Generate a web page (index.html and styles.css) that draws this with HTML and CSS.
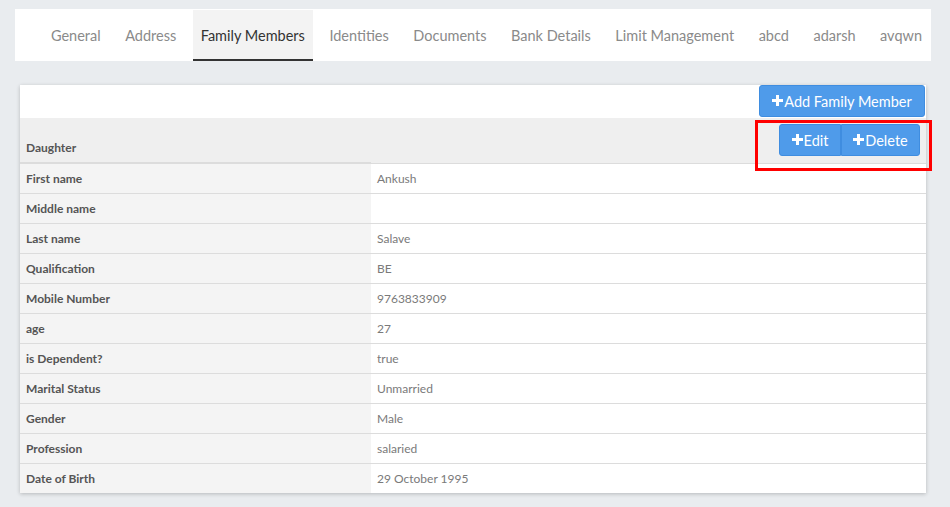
FILE: index.html
```html
<!DOCTYPE html>
<html>
<head>
<meta charset="utf-8">
<link rel="stylesheet" href="styles.css">
</head>
<body>
<div class="page">
  <nav class="tabs">
    <a class="tab">General</a>
    <a class="tab">Address</a>
    <a class="tab active">Family Members</a>
    <a class="tab">Identities</a>
    <a class="tab">Documents</a>
    <a class="tab">Bank Details</a>
    <a class="tab">Limit Management</a>
    <a class="tab">abcd</a>
    <a class="tab">adarsh</a>
    <a class="tab">avqwn</a>
  </nav>

  <section class="card">
    <div class="card-top">
      <button class="btn btn-add"><svg class="plus" viewBox="0 0 11 11"><path d="M4 0h3v4h4v3H7v4H4V7H0V4h4z" fill="#fff"/></svg>Add Family Member</button>
    </div>
    <div class="table">
      <div class="th th-label">Daughter</div>
      <div class="th th-actions">
        <div class="btn-group">
          <button class="btn"><svg class="plus" viewBox="0 0 11 11"><path d="M4 0h3v4h4v3H7v4H4V7H0V4h4z" fill="#fff"/></svg>Edit</button>
          <button class="btn"><svg class="plus" viewBox="0 0 11 11"><path d="M4 0h3v4h4v3H7v4H4V7H0V4h4z" fill="#fff"/></svg>Delete</button>
        </div>
      </div>

      <div class="lbl">First name</div><div class="val">Ankush</div>
      <div class="lbl">Middle name</div><div class="val"></div>
      <div class="lbl">Last name</div><div class="val">Salave</div>
      <div class="lbl">Qualification</div><div class="val">BE</div>
      <div class="lbl">Mobile Number</div><div class="val">9763833909</div>
      <div class="lbl">age</div><div class="val">27</div>
      <div class="lbl">is Dependent?</div><div class="val">true</div>
      <div class="lbl">Marital Status</div><div class="val">Unmarried</div>
      <div class="lbl">Gender</div><div class="val">Male</div>
      <div class="lbl">Profession</div><div class="val">salaried</div>
      <div class="lbl">Date of Birth</div><div class="val">29 October 1995</div>
    </div>
    <div class="highlight"></div>
  </section>
</div>
</body>
</html>
```

FILE: styles.css
```css
* { box-sizing: border-box; }
html, body { margin: 0; padding: 0; }
body {
  background: #e9ecef;
  font-family: Lato, "Noto Sans", sans-serif;
  width: 950px;
  height: 507px;
  overflow: hidden;
}
.page {
  padding: 9px 19px 0 15px;
}
.tabs {
  background: #fff;
  height: 52px;
  display: flex;
  justify-content: flex-end;
  gap: 8.5px;
  padding: 1px 1px 0 0;
}
.tab {
  display: flex;
  align-items: center;
  padding: 0 8px;
  font-size: 14.5px;
  color: #8a8a8a;
  border-bottom: 2px solid transparent;
  height: 51px;
  padding-top: 1px;
}
.tab.active {
  background: #f3f3f3;
  color: #333;
  border-bottom-color: #333;
}
.card {
  position: relative;
  margin: 24px 0 0 5px;
  width: 906px;
  background: #fff;
  box-shadow: 0 1px 4px rgba(0,0,0,0.22);
}
.card-top {
  height: 33px;
  display: flex;
  justify-content: flex-end;
  padding-right: 1px;
}
.btn {
  font-family: inherit;
  background: #4f9bea;
  color: #fff;
  border: 1px solid #3f8de0;
  border-radius: 3px;
  height: 32px;
  font-size: 14.5px;
  padding: 0 12px;
  display: inline-flex;
  align-items: center;
  cursor: pointer;
}
.btn-add { width: 166px; justify-content: center; padding: 0; }
.plus {
  width: 11px;
  height: 11px;
  margin-right: 1px;
  margin-top: -1px;
  flex: none;
}
.btn-group { display: flex; }
.btn-group .btn { border-radius: 0; }
.btn-group .btn:first-child { border-radius: 3px 0 0 3px; width: 62px; justify-content: center; padding: 0; }
.btn-group .btn:last-child { border-radius: 0 3px 3px 0; width: 79px; justify-content: center; padding: 0; }
.table {
  display: grid;
  grid-template-columns: 351px 1fr;
  font-size: 12px;
}
.th {
  background: #efefef;
  height: 45px;
}
.th-label {
  display: flex;
  align-items: flex-end;
  padding: 0 6px 8px;
  color: #555;
  font-weight: 700;
  box-shadow: inset 0 -1px #dcdcdc;
}
.th-actions {
  display: flex;
  justify-content: flex-end;
  padding: 6px 6px 0 0;
}
.lbl, .val {
  height: 30px;
  border-top: 1px solid #dcdcdc;
  display: flex;
  align-items: center;
  padding: 0 6px;
}
.lbl {
  background: #f4f4f4;
  color: #555;
  font-weight: 700;
}
.val {
  color: #7a7a7a;
}
.highlight {
  position: absolute;
  left: 735px;
  top: 35px;
  width: 177px;
  height: 51px;
  border: 3px solid #f00;
}
```
